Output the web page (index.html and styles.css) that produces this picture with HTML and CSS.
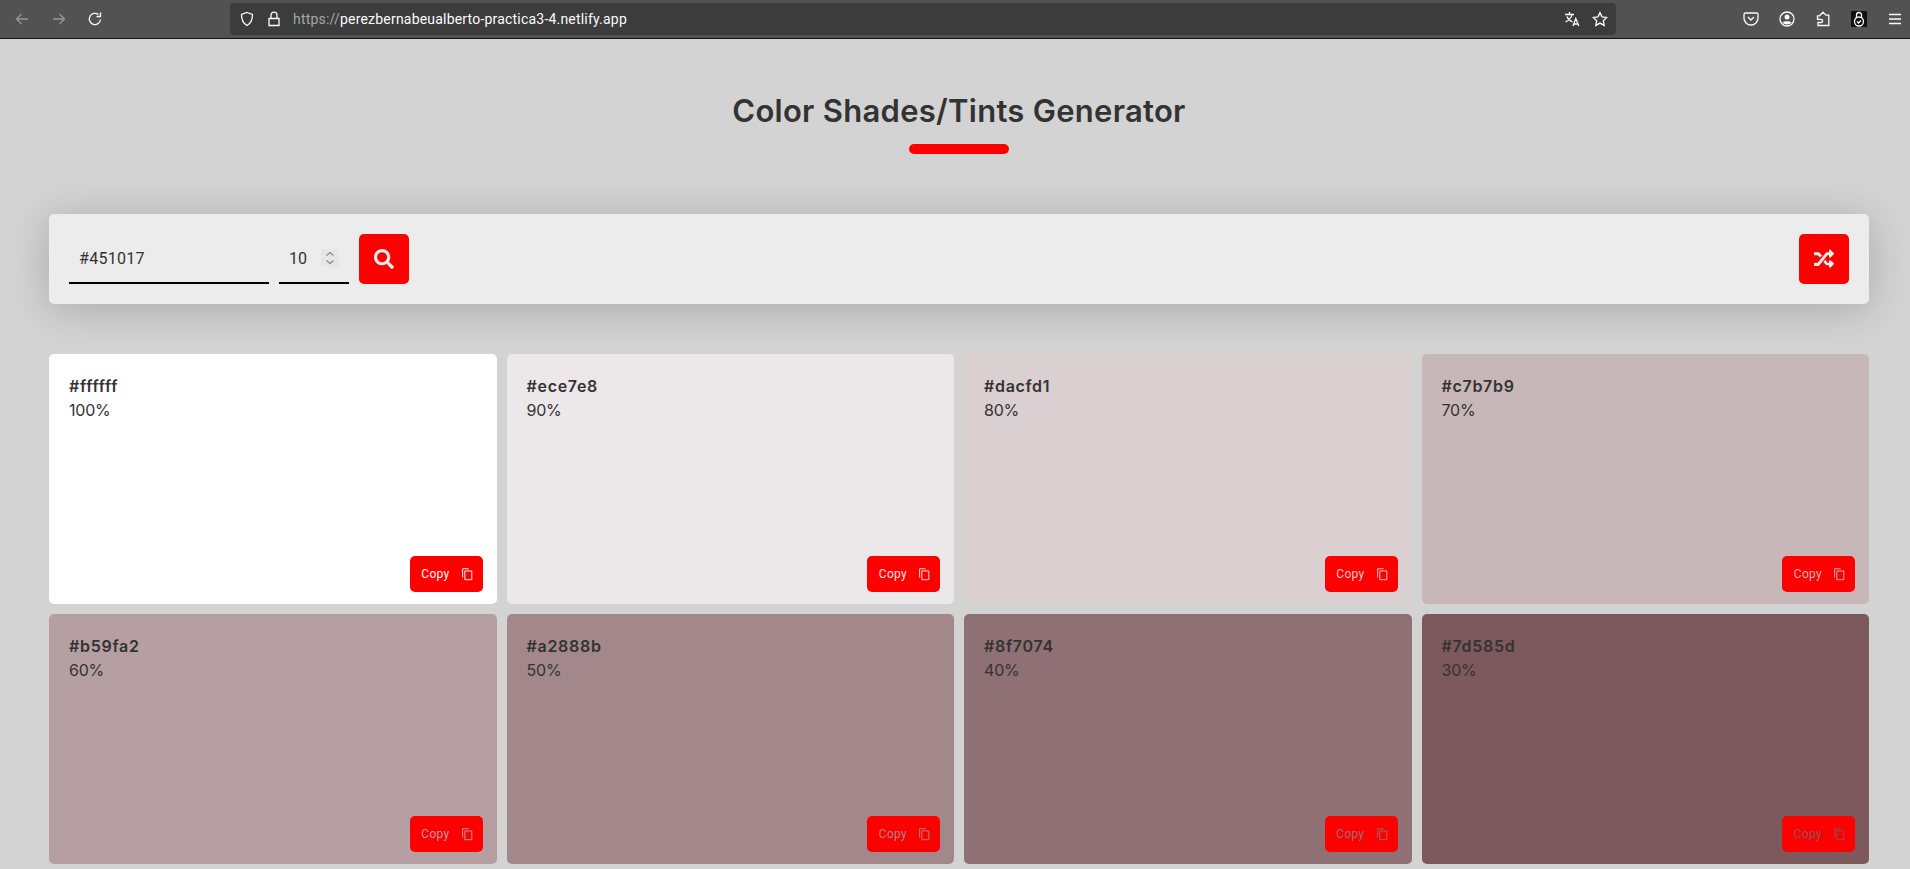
FILE: index.html
```html
<!DOCTYPE html>
<html lang="en">
<head>
    <meta charset="UTF-8">
    <meta name="viewport" content="width=device-width, initial-scale=1.0">
    <title>Color Shades/Tints Generator</title>
    <link rel="stylesheet" href="styles.css">
</head>
<body>
    <header class="toolbar">
        <div class="nav-btns">
            <svg class="tb-icon dim" viewBox="0 0 16 16"><path d="M14 8H2.500M7.500 3l-5 5 5 5"/></svg>
            <svg class="tb-icon dim" viewBox="0 0 16 16"><path d="M2 8h11.500M8.500 3l5 5-5 5"/></svg>
            <svg class="tb-icon" viewBox="0 0 16 16"><path d="M13.500 8.500A5.600 5.600 0 1 1 11.500 3.600M13.500 1.500v4h-4"/></svg>
        </div>
        <div class="urlbar">
            <svg class="tb-icon" viewBox="0 0 16 16"><path d="M8 1.500 13.500 3.400c0 5-1.500 8.800-5.500 11.100C4 12.200 2.500 8.400 2.500 3.400z"/></svg>
            <svg class="tb-icon" viewBox="0 0 16 16"><path d="M3 7.500h10v7H3zM5 7.500V4.200a3 3 0 0 1 6 0v3.300"/></svg>
            <span class="url"><span class="url-dim">https://</span>perezbernabeualberto-practica3-4.netlify.app</span>
            <span class="url-end">
                <svg class="tb-icon" viewBox="0 0 16 16"><path d="M1 3.500h9M5.500 1v2.500M8 3.500C7.500 6.500 5 9 1.500 11M3 5.500c1 2.500 3 4.500 5.500 5.500M9 15l2.800-7.500L14.800 15M10 13h3.800"/></svg>
                <svg class="tb-icon" viewBox="0 0 16 16"><path d="m8 1.500 2 4.300 4.700.6-3.400 3.300.9 4.700L8 12.100l-4.200 2.300.9-4.700L1.300 6.400 6 5.800z"/></svg>
            </span>
        </div>
        <div class="tb-right">
            <svg class="tb-icon" viewBox="0 0 16 16"><path d="M2.500 2h11A1.500 1.500 0 0 1 15 3.500V7A7 7 0 0 1 1 7V3.500A1.500 1.500 0 0 1 2.500 2zM5 6l3 3 3-3"/></svg>
            <svg class="tb-icon" viewBox="0 0 16 16"><circle cx="8" cy="8" r="7"/><circle class="solid" cx="8" cy="6" r="2.500"/><path class="solid" d="M3.500 11.500C5 9.800 11 9.800 12.500 11.500 11 14 5 14 3.500 11.500z"/></svg>
            <svg class="tb-icon" viewBox="0 0 16 16"><path d="M8 1.200l3 3h2.800v10.300H3v-3h3a1.600 1.600 0 0 0 0-3.200H2.500V4.800h2z"/></svg>
            <span class="ext-badge"><svg class="tb-icon" viewBox="0 0 16 16"><path d="M5.500 7V4a2.500 2.500 0 0 1 5 0v3"/><circle cx="8" cy="10.500" r="4.500"/><path d="m6 10.500 1.500 1.500 2.500-2.500"/></svg></span>
            <svg class="tb-icon" viewBox="0 0 16 16"><path d="M2 3.500h12M2 8h12M2 12.500h12"/></svg>
        </div>
    </header>

    <main class="page">
        <div class="title-wrap">
            <h1>Color Shades/Tints Generator</h1>
            <div class="underline"></div>
        </div>

        <section class="controls">
            <form class="search-form">
                <input class="hex-input" type="text" value="#451017">
                <div class="num-input">
                    <span>10</span>
                    <span class="spinner">
                        <svg viewBox="0 0 10 16"><path d="M1.500 5.500 5 2.500l3.500 3M1.500 10.500 5 13.500l3.500-3"/></svg>
                    </span>
                </div>
                <button class="square-btn" type="button">
                    <svg viewBox="0 0 512 512" class="fa"><path d="M505 442.700 405.300 343c-4.500-4.500-10.600-7-17-7H372c27.600-35.300 44-79.700 44-128C416 93.100 322.900 0 208 0S0 93.100 0 208s93.100 208 208 208c48.300 0 92.700-16.400 128-44v16.300c0 6.400 2.500 12.500 7 17l99.700 99.700c9.400 9.400 24.600 9.400 33.900 0l28.300-28.300c9.400-9.400 9.400-24.600.1-34zM208 336c-70.700 0-128-57.200-128-128 0-70.700 57.200-128 128-128 70.700 0 128 57.200 128 128 0 70.700-57.200 128-128 128z"/></svg>
                </button>
            </form>
            <button class="square-btn" type="button">
                <svg viewBox="0 0 512 512" class="fa"><path d="M504.970 359.030c9.370 9.370 9.370 24.570 0 33.940l-80 79.980c-15.010 15.010-40.970 4.490-40.970-16.970V416h-58.790a24 24 0 0 1-17.560-7.640l-70.650-75.700 53.330-57.140L344 352h40v-40.020c0-21.460 25.960-31.980 40.970-16.970zM12 160h84l56.640 60.680 53.330-57.140-70.650-75.700A24 24 0 0 0 117.770 80H12C5.370 80 0 85.370 0 92v56c0 6.630 5.370 12 12 12zm372 0v39.980c0 21.460 25.960 31.980 40.970 16.970l80-79.980c9.370-9.370 9.370-24.570 0-33.940l-80-80C409.960 8.020 384 18.540 384 40v40h-58.790a24 24 0 0 0-17.560 7.640L96 352H12c-6.630 0-12 5.370-12 12v56c0 6.630 5.370 12 12 12h105.770c6.650 0 13-2.760 17.550-7.640L344 160z"/></svg>
            </button>
        </section>

        <section class="grid">
            <article class="card" style="--shade:#ffffff"><h3>#ffffff</h3><p>100%</p>
                <button class="copy" type="button">Copy <svg viewBox="0 0 16 16"><path d="M5.500 4.500h8v10h-8zM3 12V2h7"/></svg></button></article>
            <article class="card" style="--shade:#ece7e8"><h3>#ece7e8</h3><p>90%</p>
                <button class="copy" type="button">Copy <svg viewBox="0 0 16 16"><path d="M5.500 4.500h8v10h-8zM3 12V2h7"/></svg></button></article>
            <article class="card" style="--shade:#dacfd1"><h3>#dacfd1</h3><p>80%</p>
                <button class="copy" type="button">Copy <svg viewBox="0 0 16 16"><path d="M5.500 4.500h8v10h-8zM3 12V2h7"/></svg></button></article>
            <article class="card" style="--shade:#c7b7b9"><h3>#c7b7b9</h3><p>70%</p>
                <button class="copy" type="button">Copy <svg viewBox="0 0 16 16"><path d="M5.500 4.500h8v10h-8zM3 12V2h7"/></svg></button></article>
            <article class="card" style="--shade:#b59fa2"><h3>#b59fa2</h3><p>60%</p>
                <button class="copy" type="button">Copy <svg viewBox="0 0 16 16"><path d="M5.500 4.500h8v10h-8zM3 12V2h7"/></svg></button></article>
            <article class="card" style="--shade:#a2888b"><h3>#a2888b</h3><p>50%</p>
                <button class="copy" type="button">Copy <svg viewBox="0 0 16 16"><path d="M5.500 4.500h8v10h-8zM3 12V2h7"/></svg></button></article>
            <article class="card" style="--shade:#8f7074"><h3>#8f7074</h3><p>40%</p>
                <button class="copy" type="button">Copy <svg viewBox="0 0 16 16"><path d="M5.500 4.500h8v10h-8zM3 12V2h7"/></svg></button></article>
            <article class="card" style="--shade:#7d585d"><h3>#7d585d</h3><p>30%</p>
                <button class="copy" type="button">Copy <svg viewBox="0 0 16 16"><path d="M5.500 4.500h8v10h-8zM3 12V2h7"/></svg></button></article>
        </section>
    </main>
</body>
</html>
```

FILE: styles.css
```css
* {
    box-sizing: border-box;
}
html, body {
    height: 100%;
    overflow: hidden;
}
body {
    margin: 0;
    background-color: #d3d3d3;
    color: #333333;
    font-family: 'Inter', sans-serif;
}

/* browser bar */
.toolbar {
    height: 39px;
    background: #525252;
    border-bottom: 1px solid #111;
    display: flex;
    align-items: center;
    padding: 0 7px 0 14px;
    color: #fbfbfe;
}
.tb-icon {
    width: 16px;
    height: 16px;
    fill: none;
    stroke: currentColor;
    stroke-width: 1.3;
    flex-shrink: 0;
}
.tb-icon .solid {
    fill: currentColor;
    stroke: none;
}
.tb-icon.dim {
    opacity: 0.4;
}
.nav-btns {
    display: flex;
    gap: 20.5px;
    width: 216px;
}
.urlbar {
    width: 1386px;
    height: 32px;
    background: #3c3c3c;
    border-radius: 4px;
    display: flex;
    align-items: center;
    gap: 11px;
    padding: 0 8px 0 9px;
}
.url {
    font-family: 'Roboto', sans-serif;
    font-size: 14px;
    letter-spacing: 0.2px;
}
.url-dim {
    color: #a6a6a6;
}
.url-end {
    margin-left: auto;
    display: flex;
    gap: 12px;
}
.tb-right {
    margin-left: auto;
    display: flex;
    align-items: center;
    gap: 20px;
}
.ext-badge {
    background: #111;
    width: 16px;
    height: 16px;
    display: flex;
}

/* page */
.page {
    padding: 0 41px 0 49px;
    height: 830px;
}
.title-wrap {
    height: 138px;
    padding-top: 52px;
    text-align: center;
}
h1 {
    margin: 0;
    font-size: 31px;
    line-height: 40px;
    font-weight: 600;
    letter-spacing: 0.27px;
    color: #333333;
}
.underline {
    width: 100px;
    height: 10px;
    margin: 13px auto 0;
    background: #ff0000;
    border-radius: 5px;
}
.controls {
    margin-top: 37px;
    height: 90px;
    background: #ececec;
    border-radius: 5px;
    box-shadow: 0 5px 40px rgba(0, 0, 0, 0.2);
    display: flex;
    justify-content: space-between;
    align-items: center;
    padding: 0 20px;
}
.search-form {
    display: flex;
    align-items: center;
    gap: 10px;
}
.hex-input {
    width: 200px;
    height: 50px;
    border: none;
    border-bottom: 2px solid #000;
    background: transparent;
    padding: 0 10px;
    font-family: 'Roboto', sans-serif;
    font-size: 16px;
    letter-spacing: 0.3px;
    color: #333;
    outline: none;
}
.num-input {
    width: 70px;
    height: 50px;
    border-bottom: 2px solid #000;
    display: flex;
    align-items: center;
    justify-content: space-between;
    padding: 0 10px;
    font-family: 'Roboto', sans-serif;
    font-size: 16px;
}
.spinner {
    width: 18px;
    height: 18px;
    background: #e6e6e9;
    display: flex;
    justify-content: center;
}
.spinner svg {
    width: 10px;
    height: 16px;
    margin-top: 1px;
    fill: none;
    stroke: #85858c;
    stroke-width: 1.2;
}
.square-btn {
    width: 50px;
    height: 50px;
    border: none;
    border-radius: 5px;
    background: #ff0000;
    display: flex;
    align-items: center;
    justify-content: center;
    padding: 0;
}
.fa {
    width: 20px;
    height: 20px;
    fill: #ececec;
}

.grid {
    margin-top: 50px;
    display: grid;
    grid-template-columns: repeat(4, 1fr);
    grid-auto-rows: 250px;
    gap: 10px;
}
.card {
    position: relative;
    background: var(--shade);
    border-radius: 5px;
    padding: 20px;
}
.card h3 {
    margin: 0;
    font-size: 16px;
    line-height: 24px;
    font-weight: 600;
    letter-spacing: 0.7px;
}
.card p {
    margin: 0;
    font-size: 16px;
    line-height: 24px;
    letter-spacing: -0.2px;
}
.copy {
    position: absolute;
    right: 13.6px;
    bottom: 12px;
    width: 73px;
    height: 36px;
    border: none;
    border-radius: 5px;
    background: #ff0000;
    color: var(--shade);
    font-family: 'Roboto', sans-serif;
    font-size: 12px;
    letter-spacing: 0.3px;
    display: flex;
    align-items: center;
    justify-content: center;
    gap: 10px;
    padding: 0 0 0 2px;
}
.copy svg {
    width: 14px;
    height: 14px;
    fill: none;
    stroke: currentColor;
    stroke-width: 1.1;
}
```
